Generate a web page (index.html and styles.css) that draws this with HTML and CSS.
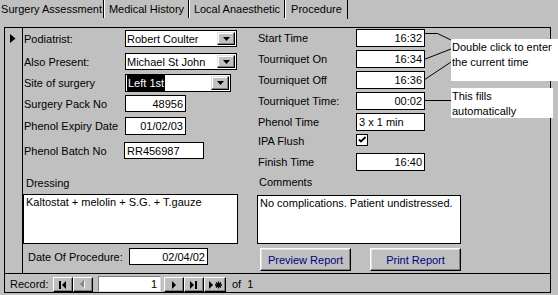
FILE: index.html
```html
<!DOCTYPE html>
<html lang="en">
<head>
<meta charset="UTF-8">
<meta name="viewport" content="width=device-width, initial-scale=1.0">
<title>Procedure</title>
<link rel="stylesheet" href="styles.css">
</head>
<body>

<div class="tabs">
  <div class="tab tab-1">Surgery Assessment</div>
  <div class="tab tab-2">Medical History</div>
  <div class="tab tab-3">Local Anaesthetic</div>
  <div class="tab tab-4">Procedure</div>
</div>

<div class="form">
  <div class="detail">
    <div class="selector">
      <svg width="6" height="9" viewBox="0 0 6 9"><path d="M0 0L5.5 4.5L0 9Z" fill="#000"/></svg>
    </div>

    <div class="col col-left">
      <div class="row l1">
        <label>Podiatrist:</label>
        <div class="combo w113"><span class="val">Robert Coulter</span><span class="drop"><svg width="7" height="4"><path d="M0 0H7L3.5 4Z"/></svg></span></div>
      </div>
      <div class="row l2">
        <label>Also Present:</label>
        <div class="combo w113"><span class="val">Michael St John</span><span class="drop"><svg width="7" height="4"><path d="M0 0H7L3.5 4Z"/></svg></span></div>
      </div>
      <div class="row l3">
        <label>Site of surgery</label>
        <div class="combo w106"><span class="val"><span class="sel">Left 1st</span></span><span class="drop"><svg width="7" height="4"><path d="M0 0H7L3.5 4Z"/></svg></span></div>
      </div>
      <div class="row l4">
        <label>Surgery Pack No</label>
        <div class="field num w61">48956</div>
      </div>
      <div class="row l5">
        <label>Phenol Expiry Date</label>
        <div class="field num w61">01/02/03</div>
      </div>
      <div class="row l6">
        <label>Phenol Batch No</label>
        <div class="field batch">RR456987</div>
      </div>
      <div class="caption cap-dressing">Dressing</div>
      <div class="memo memo-dressing">Kaltostat + melolin + S.G. + T.gauze</div>
      <div class="row date-row">
        <label>Date Of Procedure:</label>
        <div class="field num w79">02/04/02</div>
      </div>
    </div>

    <div class="col col-right">
      <div class="row r1">
        <label>Start Time</label>
        <div class="field num w69">16:32</div>
      </div>
      <div class="row r2">
        <label>Tourniquet On</label>
        <div class="field num w69">16:34</div>
      </div>
      <div class="row r2">
        <label>Tourniquet Off</label>
        <div class="field num w69">16:36</div>
      </div>
      <div class="row r2">
        <label>Tourniquet Time:</label>
        <div class="field num w69">00:02</div>
      </div>
      <div class="row r2">
        <label>Phenol Time</label>
        <div class="field w69">3 x 1 min</div>
      </div>
      <div class="row r-check">
        <label>IPA Flush</label>
        <div class="check"><svg width="10" height="10"><path d="M2 4.5L4 6.5L8.5 2" fill="none" stroke="#000" stroke-width="1.8"/></svg></div>
      </div>
      <div class="row r-finish">
        <label>Finish Time</label>
        <div class="field num w69">16:40</div>
      </div>
      <div class="caption cap-comments">Comments</div>
      <div class="memo memo-comments">No complications. Patient undistressed.</div>
      <div class="actions">
        <div class="button">Preview Report</div>
        <div class="button">Print Report</div>
      </div>
    </div>
  </div>

  <div class="nav">
    <span class="nav-label">Record:</span>
    <div class="nbtn"><svg width="8" height="8"><rect x="0" y="0" width="2" height="8"/><path d="M7 0L3 4L7 8Z"/></svg></div>
    <div class="nbtn"><svg width="6" height="9"><path d="M5 1L1 5L5 9Z" fill="#fff"/><path d="M4 0L0 4L4 8Z" fill="#808080"/></svg></div>
    <div class="nbox">1</div>
    <div class="nbtn"><svg width="5" height="8"><path d="M0 0L4 4L0 8Z"/></svg></div>
    <div class="nbtn"><svg width="8" height="8"><path d="M0 0L4 4L0 8Z"/><rect x="5" y="0" width="2" height="8"/></svg></div>
    <div class="nbtn wide"><svg width="13" height="8"><path d="M0 0L4 4L0 8Z"/><g stroke="#000" stroke-width="1.3"><path d="M9.5 0.5V7.5M6 4H13M7 1.5L12 6.5M12 1.5L7 6.5"/></g></svg></div>
    <span class="nav-of">of&nbsp; 1</span>
  </div>
</div>

<svg class="leaders" width="558" height="295">
  <polyline points="424,33.5 437.5,33.5 451,40"/>
  <line x1="424" y1="59.5" x2="451" y2="49"/>
  <line x1="424" y1="80" x2="451" y2="62"/>
  <line x1="424" y1="100.5" x2="451" y2="100.5"/>
</svg>

<div class="note note-time">Double click to enter<br>the current time</div>
<div class="note note-fill">This fills<br>automatically</div>

</body>
</html>
```

FILE: styles.css
```css
* {
  box-sizing: border-box;
}
html, body {
  margin: 0;
}
body {
  position: relative;
  width: 558px;
  height: 295px;
  overflow: hidden;
  background: #c0c0c0;
  font-family: "Liberation Sans", Arial, sans-serif;
  font-size: 11px;
  color: #000;
}

/* tab strip */
.tabs {
  display: flex;
  height: 19px;
}
.tab {
  height: 18px;
  line-height: 18px;
  text-align: center;
  white-space: nowrap;
  border-left: 1px solid #fff;
  border-right: 1px solid #000;
}
.tab-1 { width: 104px; border-left: none; }
.tab-2 { width: 85px; }
.tab-3 { width: 96px; }
.tab-4 { width: 63px; height: 19px; }

/* form frame */
.form {
  margin: 8px 0 0 4px;
  width: 547px;
  height: 266px;
  border: 1px solid #000;
  border-bottom: none;
}
.detail {
  display: flex;
  height: 246px;
  border-bottom: 1px solid #000;
}
.selector {
  width: 18px;
  padding: 5px 0 0 5px;
  border-right: 1px solid #000;
}
.col {
  display: flex;
  flex-direction: column;
}
.col-left { width: 234px; }
.col-right { flex: 1; }

.row {
  display: flex;
  align-items: center;
}
.row label {
  white-space: nowrap;
}
.col-left label { width: 102px; padding-left: 1px; }
.col-right label { width: 99px; padding-left: 1px; }

.l1 { margin-top: 2px; height: 17px; }
.l2 { margin-top: 6px; height: 17px; }
.l3 { margin-top: 4px; height: 18px; }
.l4 { margin-top: 3px; height: 17px; }
.l5 { margin-top: 5px; height: 18px; }
.l6 { margin-top: 7px; height: 17px; }

.r1 { margin-top: 1px; height: 18px; }
.r2 { margin-top: 3px; height: 18px; }
.r-check { margin-top: 3px; height: 14px; align-items: flex-start; }
.r-check label { line-height: 15px; }
.r-finish { margin-top: 5px; height: 18px; }

/* controls */
.field {
  height: 100%;
  padding: 0 2px;
  border: 1px solid #000;
  background: #fff;
  white-space: nowrap;
  overflow: hidden;
  display: flex;
  align-items: center;
}
.num { justify-content: flex-end; }
.w61 { width: 61px; }
.w69 { width: 69px; }
.w79 { width: 79px; }
.batch { width: 80px; margin-left: -1px; }

.combo {
  display: flex;
  height: 100%;
  border: 1px solid #000;
  background: #fff;
}
.w113 { width: 112px; }
.w106 { width: 106px; }
.combo .val {
  flex: 1;
  display: flex;
  align-items: center;
  padding-left: 1px;
  white-space: nowrap;
}
.combo .sel {
  align-self: stretch;
  display: flex;
  align-items: center;
  padding: 0 1px;
  background: #000;
  color: #fff;
}
.drop {
  width: 18px;
  margin: 1px 1px 1px 0;
  display: flex;
  align-items: center;
  justify-content: center;
  background: #c0c0c0;
  border: 1px solid;
  border-color: #dfdfdf #000 #000 #dfdfdf;
  box-shadow: inset -1px -1px #808080, inset 1px 1px #fff;
}

.check {
  width: 12px;
  height: 12px;
  padding: 0;
  border: 1px solid #000;
  background: #fff;
}
.check svg { display: block; }

.caption { white-space: nowrap; }
.cap-dressing { margin-top: 17px; line-height: 14px; padding-left: 3px; }
.cap-comments { margin-top: 5px; line-height: 13px; padding-left: 2px; }

.memo {
  border: 1px solid #000;
  background: #fff;
  padding: 1px 2px;
  line-height: 13px;
  white-space: nowrap;
}
.memo-dressing { margin-top: 4px; width: 215px; height: 50px; }
.memo-comments { margin-top: 6px; width: 204px; height: 49px; }

.date-row { margin-top: 4px; height: 17px; }
.date-row label { width: 106px; padding-left: 5px; }

.actions {
  display: flex;
  gap: 19px;
  margin: 4px 0 0 3px;
}
.button {
  width: 91px;
  height: 23px;
  display: flex;
  align-items: center;
  justify-content: center;
  color: #000080;
  border: 1px solid;
  border-color: #fff #000 #000 #fff;
  box-shadow: inset -1px -1px #808080, inset 1px 1px #dfdfdf;
}

/* record navigation */
.nav {
  display: flex;
  align-items: flex-end;
  height: 19px;
  border-bottom: 1px solid #000;
}
.nav-label {
  width: 48px;
  padding-left: 5px;
  line-height: 15px;
}
.nbtn {
  width: 20px;
  height: 15px;
  display: flex;
  align-items: center;
  justify-content: center;
  border: 1px solid;
  border-color: #fff #000 #000 #fff;
  box-shadow: inset -1px -1px #808080;
}
.nbtn.wide { width: 22px; }
.nbtn svg { display: block; }
.nbox {
  width: 63px;
  height: 16px;
  margin: 0 3px 0 5px;
  padding-right: 3px;
  text-align: right;
  line-height: 14px;
  background: #fff;
  border: 1px solid;
  border-color: #808080 #dfdfdf #dfdfdf #808080;
}
.nav-of {
  margin-left: 6px;
  line-height: 15px;
}

/* callouts */
.leaders {
  position: absolute;
  left: 0;
  top: 0;
  pointer-events: none;
}
.leaders polyline,
.leaders line {
  fill: none;
  stroke: #000;
  stroke-width: 1;
}
.note {
  position: absolute;
  background: #fff;
  font-size: 11px;
  line-height: 15px;
  padding: 1px 0 0 1px;
  white-space: nowrap;
}
.note-time { left: 451px; top: 39px; width: 107px; height: 42px; }
.note-fill { left: 451px; top: 88px; width: 102px; height: 30px; }
```
